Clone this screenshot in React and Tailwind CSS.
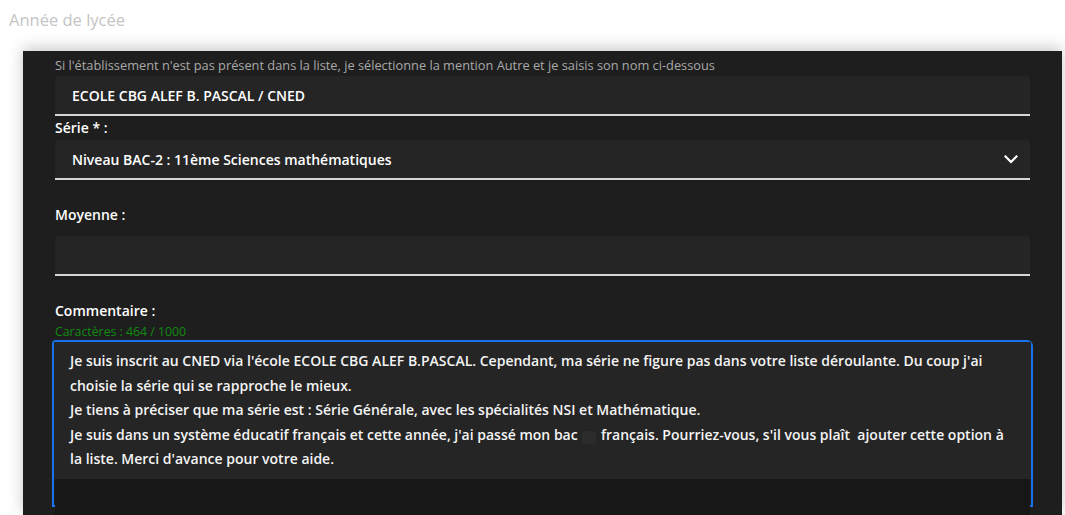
import React from "react";

const font = { fontFamily: '"Open Sans", "Noto Sans", sans-serif' };

function Chevron() {
  return (
    <svg width="14" height="9" viewBox="0 0 14 9" fill="none">
      <path d="M1.5 1.5 L7 7 L12.5 1.5" stroke="#ffffff" strokeWidth="2.2" strokeLinecap="square" />
    </svg>
  );
}

export default function App() {
  const lines = [
    "Je suis inscrit au CNED via l'école ECOLE CBG ALEF B.PASCAL. Cependant, ma série ne figure pas dans votre liste déroulante. Du coup j'ai",
    "choisie la série qui se rapproche le mieux.",
    "Je tiens à préciser que ma série est : Série Générale, avec les spécialités NSI et Mathématique.",
  ];
  return (
    <div className="w-[1065px] h-[515px] overflow-hidden bg-white" style={font}>
      <div className="pl-[9px] pt-[8px] h-[51px] text-[16.5px] leading-[24px] text-[#c4c4c4]">Année de lycée</div>
      <div className="ml-[23px] w-[1039px] h-[464px] bg-[#1e1e1e] shadow-[0_-3px_14px_rgba(0,0,0,0.22)] pl-[32px] pr-[32px] text-white">
        <div className="pt-[6px] h-[25px] text-[12.8px] leading-[17px] text-[#a9a9a9]">
          Si l'établissement n'est pas présent dans la liste, je sélectionne la mention Autre et je saisis son nom ci-dessous
        </div>
        <div className="h-[40px] bg-[#252525] rounded-t-[4px] border-b-2 border-[#d6d6d6] flex items-center pl-[17px] text-[14px] font-semibold">
          ECOLE CBG ALEF B. PASCAL / CNED
        </div>
        <div className="h-[24px] pt-[2px] text-[14px] leading-[19px] font-semibold">Série * :</div>
        <div className="h-[40px] bg-[#252525] rounded-t-[4px] border-b-2 border-[#d6d6d6] flex items-center justify-between pl-[17px] pr-[12px] text-[14px] font-semibold">
          <span>Niveau BAC-2 : 11ème Sciences mathématiques</span>
          <Chevron />
        </div>
        <div className="h-[56px] pt-[25px] text-[14px] leading-[19px] font-semibold">Moyenne :</div>
        <div className="h-[40px] bg-[#252525] rounded-t-[4px] border-b-2 border-[#d6d6d6]"></div>
        <div className="h-[48px] pt-[25px] text-[14px] leading-[19px] font-semibold">Commentaire :</div>
        <div className="h-[16px] text-[12.3px] leading-[16px] text-[#118a11]">Caractères : 464 / 1000</div>
        <div className="-ml-[3px] -mr-[3px] h-[167px] border-2 border-[#1673ea] rounded-tl-[4px] rounded-tr-[6px] flex flex-col">
          <div className="shrink-0 bg-[#252525] h-[137px] pl-[16px] pt-[7px] text-[14px] leading-[24.5px] font-semibold text-[#f4f4f4]">
            {lines.map((l) => (
              <div key={l} className="whitespace-nowrap">{l}</div>
            ))}
            <div className="whitespace-nowrap">
              Je suis dans un système éducatif français et cette année, j'ai passé mon bac{" "}
              <span className="inline-block w-[14px] h-[13px] align-[-4px] rounded-[4px] bg-[#2c2c2c] mx-[1px]"></span>
              {"  "}français. Pourriez-vous, s'il vous plaît&nbsp; ajouter cette option à
            </div>
            <div className="whitespace-nowrap">la liste. Merci d'avance pour votre aide.</div>
          </div>
          <div className="shrink-0 mx-[1px] h-[40px] bg-[#171717] relative z-10"></div>
        </div>
      </div>
    </div>
  );
}
